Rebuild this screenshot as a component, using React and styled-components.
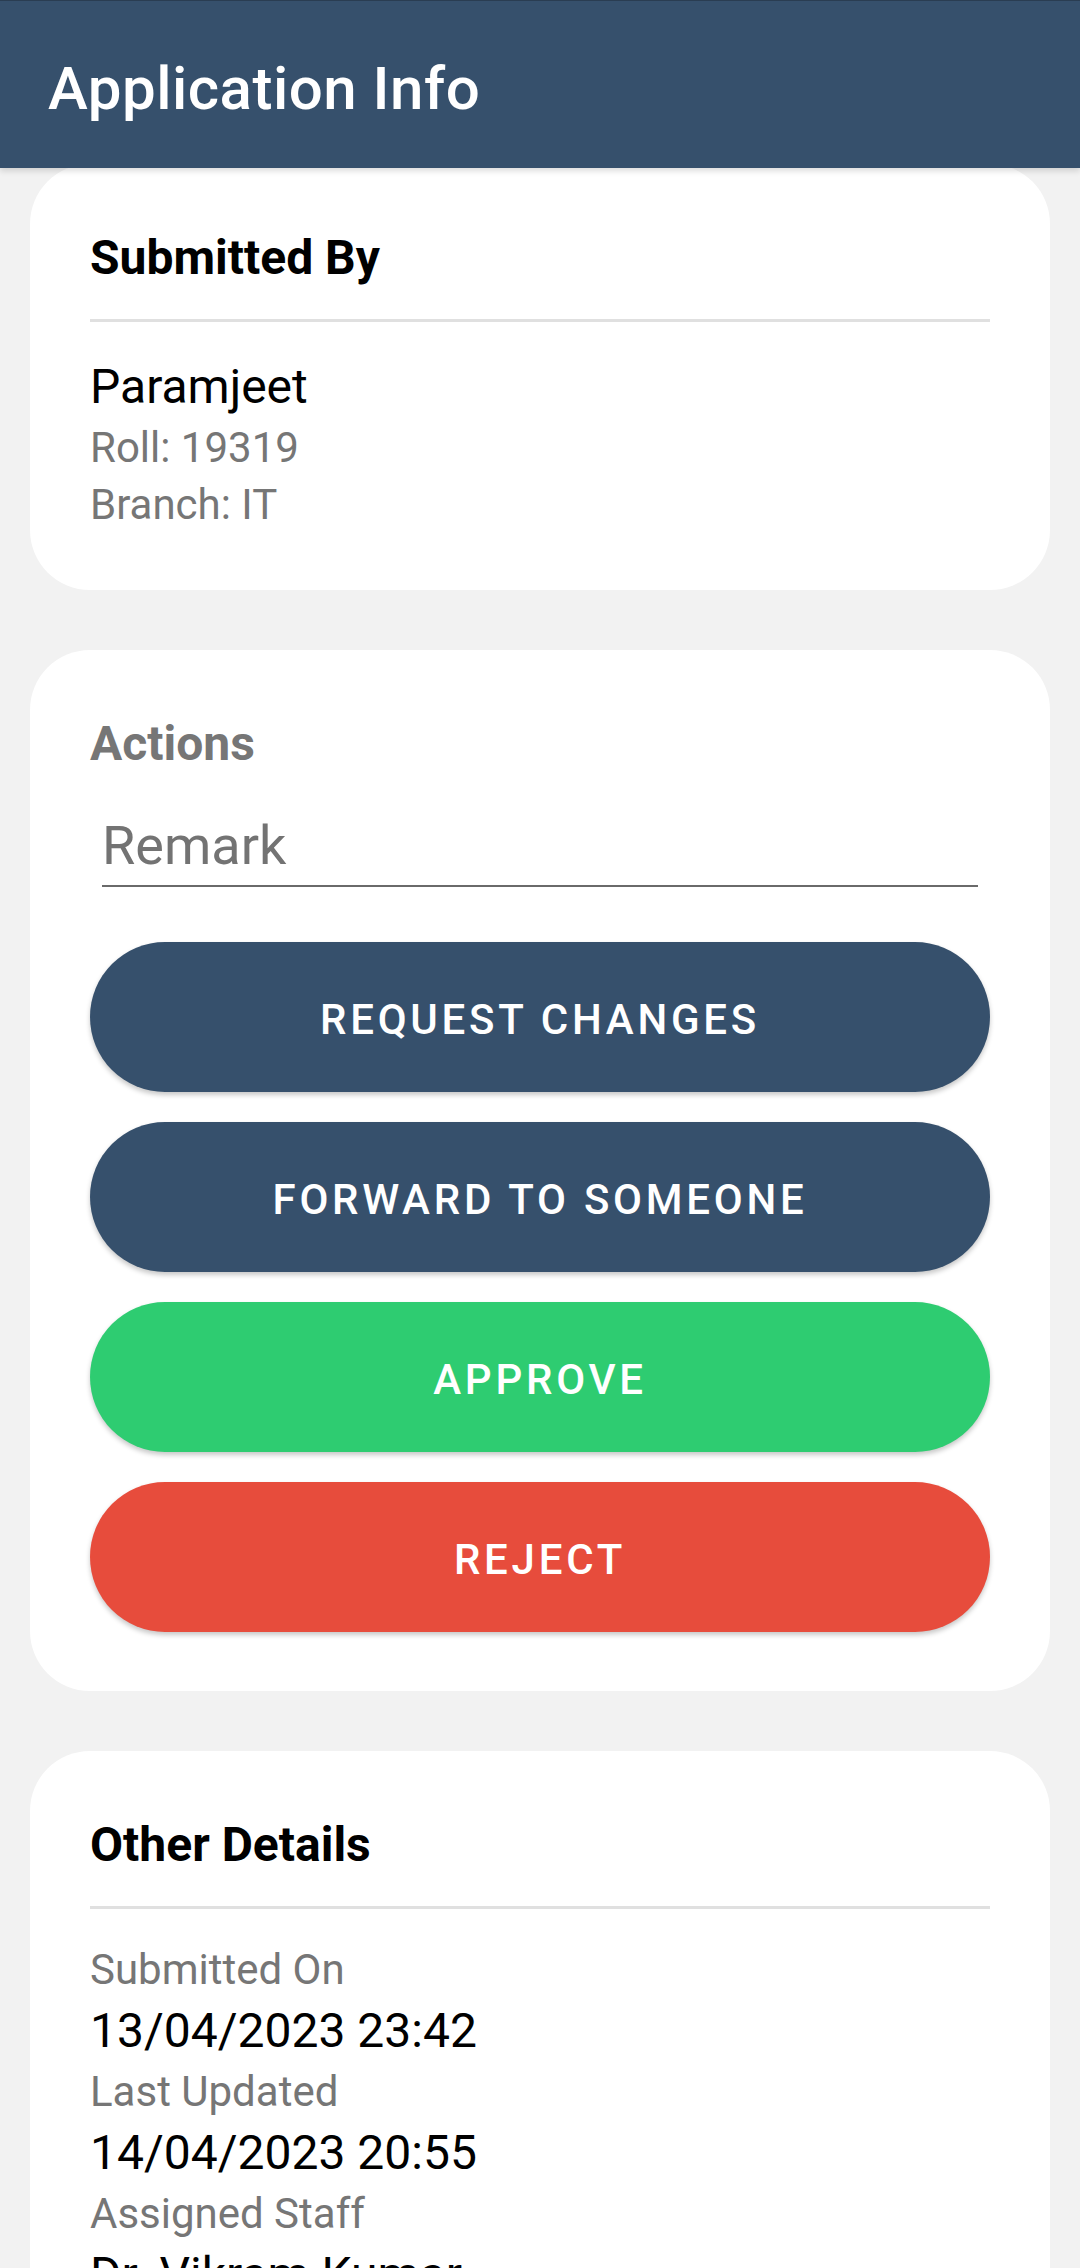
import styled, { createGlobalStyle } from 'styled-components'

const GlobalStyle = createGlobalStyle`
  body {
    margin: 0;
    background: #f2f2f2;
    font-family: Roboto, "Noto Sans", sans-serif;
  }
`

const Page = styled.div`
  min-height: 100vh;
  background: #f2f2f2;
`

const Header = styled.header`
  position: relative;
  z-index: 1;
  height: 168px;
  box-sizing: border-box;
  display: flex;
  align-items: center;
  padding: 8px 48px 0;
  background: #36506c;
  border-top: 1px solid #2a3d52;
  box-shadow: 0 3px 6px rgba(0, 0, 0, 0.14);
`

const Title = styled.h1`
  margin: 0;
  font-size: 60px;
  font-weight: 500;
  letter-spacing: 0.5px;
  color: #fff;
`

const Content = styled.main`
  display: flex;
  flex-direction: column;
  gap: 60px;
  padding: 0 30px 30px;
`

const Card = styled.section`
  background: #fff;
  border-radius: 60px;
  padding: 66px 60px ${p => p.$bottom || 60}px;
  &:first-child {
    margin-top: -4px;
  }
`

const CardTitle = styled.h2`
  margin: 0;
  font-size: 48px;
  line-height: 56px;
  font-weight: 700;
  color: ${p => (p.$muted ? '#767676' : '#000')};
`

const Divider = styled.hr`
  border: none;
  height: 3px;
  background: #e0e0e0;
  margin: 33px 0 32px;
`

const Value = styled.div`
  font-size: 48px;
  line-height: 65px;
  color: #000;
`

const Label = styled.div`
  font-size: 42px;
  line-height: 57px;
  color: #767676;
`

const RemarkInput = styled.input`
  display: block;
  width: calc(100% - 24px);
  box-sizing: border-box;
  height: 86px;
  margin: 29px 12px 0;
  padding: 12px 0 8px;
  border: none;
  border-bottom: 2px solid #6a6a6a;
  background: transparent;
  font-family: Roboto, sans-serif;
  font-size: 54px;
  line-height: 64px;
  color: #222;
  outline: none;
  &::placeholder {
    color: #737373;
  }
`

const ButtonStack = styled.div`
  display: flex;
  flex-direction: column;
  gap: 30px;
  margin-top: 55px;
`

const ActionButton = styled.button`
  height: 150px;
  border: none;
  border-radius: 75px;
  padding: 4px 0 0;
  background: ${p => p.$color};
  color: #fff;
  font-family: Roboto, sans-serif;
  font-size: 42px;
  font-weight: 500;
  letter-spacing: 3.75px;
  text-transform: uppercase;
  box-shadow: 0 3px 5px rgba(0, 0, 0, 0.22);
  cursor: pointer;
`

const actions = [
  { label: 'Request Changes', color: '#36506c' },
  { label: 'Forward to Someone', color: '#36506c' },
  { label: 'Approve', color: '#2ecc71' },
  { label: 'Reject', color: '#e74c3c' },
]

const details = [
  { label: 'Submitted On', value: '13/04/2023 23:42' },
  { label: 'Last Updated', value: '14/04/2023 20:55' },
  { label: 'Assigned Staff', value: 'Dr. Vikram Kumar' },
]

const App = () => {
  return (
    <Page>
      <GlobalStyle />
      <Header>
        <Title>Application Info</Title>
      </Header>
      <Content>
        <Card $bottom={57}>
          <CardTitle>Submitted By</CardTitle>
          <Divider />
          <Value>Paramjeet</Value>
          <Label>Roll: 19319</Label>
          <Label>Branch: IT</Label>
        </Card>

        <Card $bottom={59}>
          <CardTitle $muted>Actions</CardTitle>
          <RemarkInput placeholder="Remark" />
          <ButtonStack>
            {actions.map(a => (
              <ActionButton key={a.label} $color={a.color}>
                {a.label}
              </ActionButton>
            ))}
          </ButtonStack>
        </Card>

        <Card>
          <CardTitle>Other Details</CardTitle>
          <Divider />
          {details.map(d => (
            <div key={d.label}>
              <Label>{d.label}</Label>
              <Value>{d.value}</Value>
            </div>
          ))}
        </Card>
      </Content>
    </Page>
  )
}

export default App
